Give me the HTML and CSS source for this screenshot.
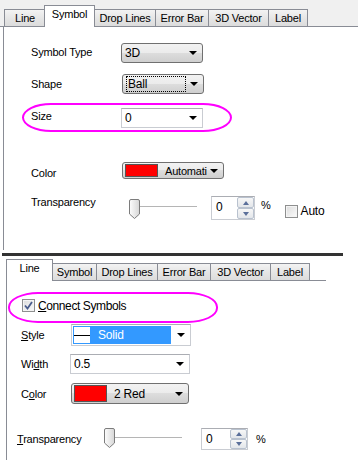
FILE: index.html
```html
<!DOCTYPE html>
<html lang="en">
<head>
  <meta charset="UTF-8" />
  <title>Plot Details</title>
  <link rel="stylesheet" href="styles.css">
</head>
<body>
  <!-- Dialog 1: Symbol tab -->
  <div class="dlg dlg-top">
    <div class="tabs">
      <span class="tab t-line">Line</span>
      <span class="tab t-symbol active">Symbol</span>
      <span class="tab t-drop">Drop Lines</span>
      <span class="tab t-error">Error Bar</span>
      <span class="tab t-vector">3D Vector</span>
      <span class="tab t-label">Label</span>
    </div>
    <div class="panel">
      <div class="row row-type">
        <span class="lbl">Symbol Type</span>
        <div class="combo drop">3D<i class="arrow"></i></div>
      </div>
      <div class="row row-shape">
        <span class="lbl">Shape</span>
        <div class="combo drop"><span class="focus">Ball</span><i class="arrow"></i></div>
      </div>
      <div class="row row-size">
        <span class="lbl">Size</span>
        <div class="combo edit">0<i class="arrow"></i></div>
        <div class="mark mark-size"></div>
      </div>
      <div class="row row-color">
        <span class="lbl">Color</span>
        <div class="colorbtn"><span class="swatch"></span><span class="ctext">Automati</span><i class="arrow"></i></div>
      </div>
      <div class="row row-trans">
        <span class="lbl">Transparency</span>
        <div class="slider">
          <span class="track"></span>
          <svg class="thumb" width="11" height="20" viewBox="0 0 11 20">
            <defs>
              <linearGradient id="tg1" x1="0" y1="0" x2="1" y2="0">
                <stop offset="0" stop-color="#fdfdfd"/>
                <stop offset="1" stop-color="#d6d6d6"/>
              </linearGradient>
            </defs>
            <path d="M2 0.5 h7 a1.5 1.5 0 0 1 1.5 1.5 v13 l-5 4.5 l-5 -4.5 v-13 a1.5 1.5 0 0 1 1.5 -1.5 z" fill="url(#tg1)" stroke="#7c7c7c"/>
          </svg>
        </div>
        <div class="spin">
          <span class="sval">0</span>
          <span class="sbtns">
            <span class="sbtn"><i class="up"></i></span>
            <span class="sbtn"><i class="down"></i></span>
          </span>
        </div>
        <span class="pct">%</span>
        <span class="check"></span>
        <span class="auto">Auto</span>
      </div>
    </div>
  </div>

  <div class="sep"></div>

  <!-- Dialog 2: Line tab -->
  <div class="dlg dlg-bottom">
    <div class="tabs">
      <span class="tab t-line active">Line</span>
      <span class="tab t-symbol">Symbol</span>
      <span class="tab t-drop">Drop Lines</span>
      <span class="tab t-error">Error Bar</span>
      <span class="tab t-vector">3D Vector</span>
      <span class="tab t-label">Label</span>
    </div>
    <div class="panel">
      <div class="row row-connect">
        <span class="check checked">
          <svg width="9" height="9" viewBox="0 0 9 9"><path d="M1 4.5 L3.5 7.5 L8 1" fill="none" stroke="#4a5c8c" stroke-width="1.8"/></svg>
        </span>
        <span class="ctl-text"><u>C</u>onnect Symbols</span>
        <div class="mark mark-connect"></div>
      </div>
      <div class="row row-style">
        <span class="lbl"><u>S</u>tyle</span>
        <div class="combo edit wide">
          <span class="sel"><span class="linebox"></span>Solid</span>
          <i class="arrow"></i>
        </div>
      </div>
      <div class="row row-width">
        <span class="lbl">Wi<u>d</u>th</span>
        <div class="combo edit wide">0.5<i class="arrow"></i></div>
      </div>
      <div class="row row-color2">
        <span class="lbl">C<u>o</u>lor</span>
        <div class="colorbtn wide"><span class="swatch"></span><span class="ctext">2 Red</span><i class="arrow"></i></div>
      </div>
      <div class="row row-trans2">
        <span class="lbl"><u>T</u>ransparency</span>
        <div class="slider">
          <span class="track"></span>
          <svg class="thumb" width="11" height="20" viewBox="0 0 11 20">
            <defs>
              <linearGradient id="tg2" x1="0" y1="0" x2="1" y2="0">
                <stop offset="0" stop-color="#fdfdfd"/>
                <stop offset="1" stop-color="#d6d6d6"/>
              </linearGradient>
            </defs>
            <path d="M2 0.5 h7 a1.5 1.5 0 0 1 1.5 1.5 v13 l-5 4.5 l-5 -4.5 v-13 a1.5 1.5 0 0 1 1.5 -1.5 z" fill="url(#tg2)" stroke="#7c7c7c"/>
          </svg>
        </div>
        <div class="spin">
          <span class="sval">0</span>
          <span class="sbtns">
            <span class="sbtn"><i class="up"></i></span>
            <span class="sbtn"><i class="down"></i></span>
          </span>
        </div>
        <span class="pct">%</span>
      </div>
    </div>
  </div>
</body>
</html>
```

FILE: styles.css
```css
body {
  margin: 0;
  background-color: #fff;
  font-family: 'Liberation Sans', Arial, sans-serif;
  font-size: 11px;
  letter-spacing: -0.2px;
  color: #000;
}

/* tabs */
.tabs {
  display: flex;
  align-items: flex-end;
  box-sizing: border-box;
  border-bottom: 1px solid #898c95;
}
.tab {
  flex: none;
  box-sizing: border-box;
  height: 17px;
  margin-right: -1px;
  border: 1px solid #898c95;
  border-bottom: none;
  background: linear-gradient(#f3f3f3, #e6e6e6 50%, #dcdcdc);
  line-height: 16px;
  text-align: center;
  white-space: nowrap;
}
.t-line { width: 42px; }
.t-symbol { width: 45px; }
.t-drop { width: 62px; }
.t-error { width: 54px; }
.t-vector { width: 61px; }
.t-label { width: 40px; }
.tab.active {
  position: relative;
  z-index: 1;
  height: 22px;
  margin-bottom: -1px;
  background: #fff;
  line-height: 17px;
}
.t-symbol.active { width: 51px; margin-left: -1px; }
.t-line.active { width: 47px; }

.dlg-top .tabs {
  height: 27px;
  padding-left: 4px;
  background-color: #f0f0f0;
}
.dlg-top .panel {
  margin-left: 3px;
  padding: 16px 0 30px 27px;
  border-left: 1px solid #898c95;
}

.dlg-bottom {
  margin-left: 6px;
  width: 320px;
}
.dlg-bottom .tabs {
  height: 25px;
}
.dlg-bottom .panel {
  padding: 18px 0 10px 14px;
  border-left: 1px solid #898c95;
}

.sep {
  height: 3px;
  width: 341px;
  margin: 3px 0 0 2px;
  background-color: #333;
}

/* rows */
.row {
  position: relative;
  display: flex;
  align-items: center;
}
.lbl {
  flex: none;
  width: 90px;
}
.dlg-bottom .lbl {
  width: 50px;
}
.row-type { height: 20px; }
.row-type .lbl { margin-top: -2px; }
.row-shape { height: 20px; margin-top: 11px; }
.row-size { height: 20px; margin-top: 14px; }
.row-size .lbl { margin-top: -4px; }
.row-color { height: 17px; margin-top: 34px; }
.row-color .lbl { margin-top: 4px; }
.row-color .colorbtn { margin-left: 1px; }
.row-trans { height: 24px; margin-top: 17px; }
.row-trans .lbl { margin-top: -12px; }

.row-connect { height: 13px; }
.row-style { height: 22px; margin-top: 12px; }
.row-width { height: 20px; margin-top: 8px; }
.row-color2 { height: 21px; margin-top: 9px; }
.row-trans2 { height: 22px; margin-top: 24px; }
.row-trans2 .lbl { width: 85px; margin-left: -4px; }

/* combos */
.combo {
  position: relative;
  box-sizing: border-box;
  width: 82px;
  height: 20px;
  padding-left: 3px;
  display: flex;
  align-items: center;
  font-size: 12px;
}
.combo.drop {
  border: 1px solid #707070;
  border-radius: 3px;
  background: linear-gradient(#f2f2f2, #ebebeb 50%, #dddddd 50%, #cfcfcf);
}
.row-shape .combo { margin-left: 1px; }
.focus {
  box-sizing: border-box;
  width: 60px;
  height: 16px;
  padding-left: 1px;
  line-height: 14px;
  border: 1px dotted #000;
}
.combo.edit {
  border: 1px solid #c9ccd2;
  border-top-color: #abadb3;
  background: #fff;
}
.combo.wide {
  width: 120px;
  height: 100%;
}
.row-style .combo { padding-left: 1px; }
.row-width .combo { margin-left: -1px; }
.arrow {
  position: absolute;
  right: 5px;
  top: 50%;
  margin-top: -2px;
  width: 0;
  height: 0;
  border-left: 4px solid transparent;
  border-right: 4px solid transparent;
  border-top: 4px solid #000;
}
.sel {
  display: flex;
  align-items: center;
  width: 98px;
  height: 18px;
  background-color: #3399ff;
  color: #fff;
}
.linebox {
  box-sizing: border-box;
  width: 18px;
  height: 18px;
  margin-right: 7px;
  border: 1px solid #3399ff;
  background: #fff linear-gradient(#fff 8px, #000 8px, #000 9px, #fff 9px);
}

/* colour button */
.colorbtn {
  position: relative;
  box-sizing: border-box;
  width: 102px;
  height: 100%;
  padding-left: 2px;
  display: flex;
  align-items: center;
  border: 1px solid #707070;
  border-radius: 3px;
  background: linear-gradient(#f2f2f2, #ebebeb 50%, #dddddd 50%, #cfcfcf);
}
.colorbtn .swatch {
  box-sizing: border-box;
  width: 33px;
  height: 13px;
  margin-right: 7px;
  border: 1px solid #555;
  background-color: #ff0000;
}
.colorbtn.wide {
  width: 118px;
  font-size: 12px;
}
.colorbtn.wide .swatch {
  width: 33px;
  height: 17px;
}

/* slider */
.slider {
  position: relative;
  flex: none;
  width: 70px;
  height: 24px;
  margin-left: 6px;
}
.row-trans2 .slider {
  width: 80px;
  margin-left: 0;
}
.track {
  position: absolute;
  left: 10px;
  right: 0;
  top: 10px;
  height: 1px;
  background-color: #b5b5b5;
  border-bottom: 1px solid #fff;
}
.thumb {
  position: absolute;
  left: 2px;
  top: 3px;
}
.row-trans2 .thumb {
  top: 1px;
}

/* spin box */
.spin {
  box-sizing: border-box;
  display: flex;
  width: 44px;
  height: 24px;
  margin-left: 14px;
  border: 1px solid #c9ccd2;
  border-top-color: #abadb3;
  background: #fff;
  font-size: 12px;
}
.row-trans2 .spin {
  width: 47px;
  height: 22px;
  margin-left: 19px;
}
.sval {
  flex: 1;
  padding-left: 4px;
  line-height: 21px;
}
.sbtns {
  display: flex;
  flex-direction: column;
  width: 17px;
}
.sbtn {
  flex: 1;
  position: relative;
  box-sizing: border-box;
  border: 1px solid #b9c2cf;
  border-radius: 2px;
  background: linear-gradient(#f7f7f7, #e3e6ea);
}
.sbtn i {
  position: absolute;
  left: 50%;
  top: 50%;
  margin: -2px 0 0 -3px;
  width: 0;
  height: 0;
  border-left: 3px solid transparent;
  border-right: 3px solid transparent;
}
.sbtn .up { border-bottom: 4px solid #5a6f9a; }
.sbtn .down { border-top: 4px solid #5a6f9a; }
.pct {
  margin: 0 0 6px 6px;
}
.row-trans2 .pct {
  margin-left: 8px;
  margin-bottom: 0;
}

/* checkbox */
.check {
  box-sizing: border-box;
  width: 13px;
  height: 13px;
  margin: 6px 0 0 14px;
  border: 1px solid #8e8f8f;
  background: linear-gradient(135deg, #dcdcdc, #fbfbfb);
  box-shadow: inset 0 0 0 1px #f4f4f4;
  display: flex;
  align-items: center;
  justify-content: center;
}
.check.checked {
  margin: 0 0 0 1px;
}
.auto {
  margin: 6px 0 0 3px;
  font-size: 12px;
}
.ctl-text {
  margin-left: 3px;
  font-size: 12px;
  letter-spacing: -0.4px;
}

/* highlight marks */
.mark {
  position: absolute;
  box-sizing: border-box;
  width: 210px;
  border: 2px solid #ff00ff;
  border-radius: 30px / 15px;
}
.mark-size {
  left: -9px;
  top: -5px;
  height: 29px;
}
.mark-connect {
  left: -13px;
  top: -7px;
  height: 31px;
}
```
